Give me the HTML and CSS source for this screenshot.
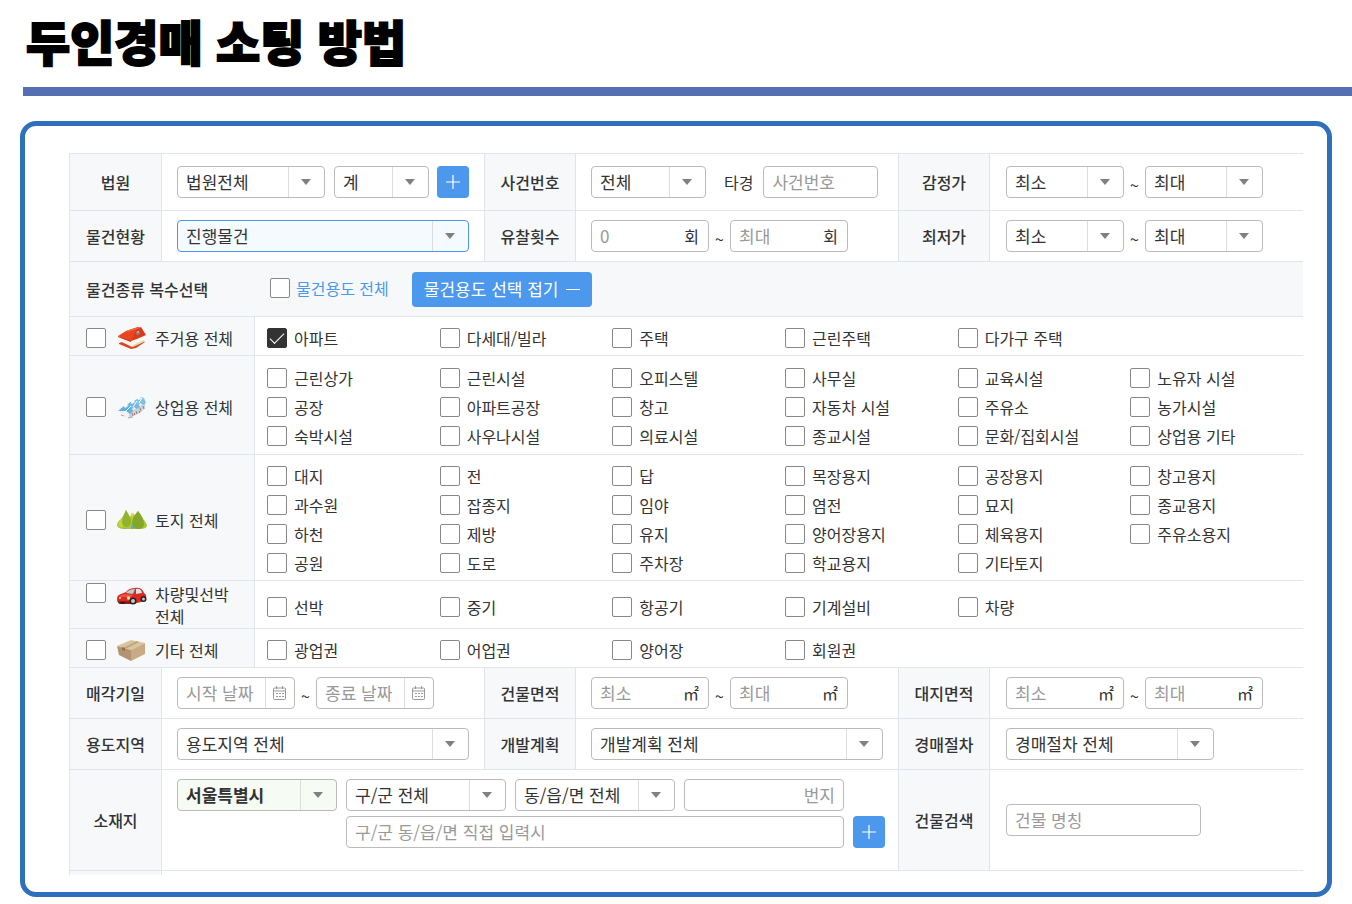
FILE: index.html
```html
<!DOCTYPE html>
<html lang="ko">
<head>
<meta charset="utf-8">
<meta name="viewport" content="width=device-width, initial-scale=1">
<title>두인경매 소팅 방법</title>
<link rel="stylesheet" href="styles.css">
</head>
<body>
<header class="page-header">
  <h1 class="page-title">두인경매 소팅 방법</h1>
</header>
<main class="card">
  <form class="search">
    <div class="row row-first">
      <div class="head">법원</div>
      <div class="cell">
        <span class="select w-court"><select aria-label="법원"><option>법원전체</option></select></span>
        <span class="select w-dept"><select aria-label="계"><option>계</option></select></span>
        <button type="button" class="add" aria-label="법원 추가"><svg viewBox="0 0 32 32"><path d="M16 9v14M9 16h14"/></svg></button>
      </div>
      <div class="head">사건번호</div>
      <div class="cell">
        <span class="select w-case"><select aria-label="사건연도"><option>전체</option></select></span>
        <label class="case-label" for="case-no">타경</label>
        <span class="field w-case"><input id="case-no" type="text" placeholder="사건번호"></span>
      </div>
      <div class="head">감정가</div>
      <div class="cell cell-last">
        <span class="select w-range"><select aria-label="감정가 최소"><option>최소</option></select></span>
        <span class="tilde">~</span>
        <span class="select w-range"><select aria-label="감정가 최대"><option>최대</option></select></span>
      </div>
    </div>

    <div class="row">
      <div class="head">물건현황</div>
      <div class="cell">
        <span class="select select-active grow"><select aria-label="물건현황"><option>진행물건</option></select></span>
      </div>
      <div class="head">유찰횟수</div>
      <div class="cell">
        <span class="field w-range"><input type="text" placeholder="0" aria-label="유찰횟수 최소"><span class="unit">회</span></span>
        <span class="tilde">~</span>
        <span class="field w-range"><input type="text" placeholder="최대" aria-label="유찰횟수 최대"><span class="unit">회</span></span>
      </div>
      <div class="head">최저가</div>
      <div class="cell cell-last">
        <span class="select w-range"><select aria-label="최저가 최소"><option>최소</option></select></span>
        <span class="tilde">~</span>
        <span class="select w-range"><select aria-label="최저가 최대"><option>최대</option></select></span>
      </div>
    </div>

    <div class="kind-bar">
      <div class="kind-title">물건종류 복수선택</div>
      <label class="check check-all"><input type="checkbox">물건용도 전체</label>
      <button type="button" class="fold">물건용도 선택 접기<svg viewBox="0 0 14 14"><path d="M0 7.5h14"/></svg></button>
    </div>

    <div class="kind">
      <label class="kind-head"><input type="checkbox">
        <svg class="kind-icon" viewBox="0 0 30 24">
          <path fill="#e0401f" d="M2 17l3-1 10 4 11-5 2 1-9 6-5 1-12-5z"/>
          <path fill="#f6f1e9" d="M5 12v4l10 5 1-8z"/>
          <path fill="#fbf8ee" d="M15 13v8l12-6V9z"/>
          <path fill="#dcdca8" d="M16 19l11-5v2l-11 5z"/>
          <path fill="#c32c12" d="M1 10l13 4v2L1 11z"/>
          <path fill="#ea4420" d="M1 10l8-5L21 1l3 1-5 9-5 4z"/>
          <path fill="#d93a1b" d="M24 1l5 8-9 4-6 2 6-12z"/>
          <path fill="#f2613c" d="M9 5l12-4 2 1-12 4z"/>
          <circle cx="21" cy="7" r="2" fill="#8d7d83"/><circle cx="21" cy="6" r="1" fill="#c9b9bc"/>
        </svg>
        <span>주거용 전체</span></label>
      <div class="kind-body">
        <label class="check"><input type="checkbox" checked>아파트</label>
        <label class="check"><input type="checkbox">다세대/빌라</label>
        <label class="check"><input type="checkbox">주택</label>
        <label class="check"><input type="checkbox">근린주택</label>
        <label class="check"><input type="checkbox">다가구 주택</label>
      </div>
    </div>

    <div class="kind kind-3">
      <label class="kind-head"><input type="checkbox">
        <svg class="kind-icon" viewBox="0 0 30 24">
          <path fill="#f1f2f3" d="M3 14l10 0 15-9v8l-5 5-12 5-8-3z"/>
          <path fill="#d0d1d2" d="M12 18l4-3 12-7v5l-5 5-11 5z"/>
          <path fill="#62b2e0" d="M1 16l7-6 6 1 2 5-3 3-4-3z"/>
          <path fill="#70bbe5" d="M9 11l6-6 5 1 3 6-3 2-3-2-2 2-2-3z"/>
          <path fill="#7dc3e8" d="M17 6l6-4 4 1 2 5-3 2-3-2-1 2-2-3z"/>
          <path stroke="#fff" stroke-width="1" d="M14 11l-5 5M20 6l-4 6M25 3l-3 5"/>
          <path fill="#fff" d="M6 10l3-2 2 3-3 2zM13 6l3-2 2 3-3 2zM20 2l3-1 1 3-3 1z"/>
          <path stroke="#85888c" stroke-width="1" d="M15 18l1 3M19 16l1 3M23 13l1 3M26 11l1 3"/>
          <path stroke="#b1a79b" stroke-width="1" d="M11 23l5-1M4 20l3 1"/>
          <path fill="#c77258" d="M17 18h1v2h-1zM22 16h1v2h-1z"/>
        </svg>
        <span>상업용 전체</span></label>
      <div class="kind-body">
        <label class="check"><input type="checkbox">근린상가</label>
        <label class="check"><input type="checkbox">근린시설</label>
        <label class="check"><input type="checkbox">오피스텔</label>
        <label class="check"><input type="checkbox">사무실</label>
        <label class="check"><input type="checkbox">교육시설</label>
        <label class="check"><input type="checkbox">노유자 시설</label>
        <label class="check"><input type="checkbox">공장</label>
        <label class="check"><input type="checkbox">아파트공장</label>
        <label class="check"><input type="checkbox">창고</label>
        <label class="check"><input type="checkbox">자동차 시설</label>
        <label class="check"><input type="checkbox">주유소</label>
        <label class="check"><input type="checkbox">농가시설</label>
        <label class="check"><input type="checkbox">숙박시설</label>
        <label class="check"><input type="checkbox">사우나시설</label>
        <label class="check"><input type="checkbox">의료시설</label>
        <label class="check"><input type="checkbox">종교시설</label>
        <label class="check"><input type="checkbox">문화/집회시설</label>
        <label class="check"><input type="checkbox">상업용 기타</label>
      </div>
    </div>

    <div class="kind kind-4">
      <label class="kind-head"><input type="checkbox">
        <svg class="kind-icon" viewBox="0 0 30 24">
          <path fill="#a9c832" d="M0 17q0-3 4-6Q7 8 9 2q2 5 4 7l2-4 3 2 3-4q3 4 5 8 4 4 4 7-1 3-7 3H6q-6-1-6-4z"/>
          <path fill="#c0d444" d="M1 16q1-4 6-6l1 9H4q-3 0-3-3z"/>
          <path fill="#93b32f" d="M9 2q-3 6-4 11 0 5 3 6 6 0 6-5 0-4-5-12z"/>
          <path fill="#86a62a" d="M21 3q-6 7-6 13 0 5 6 5t6-5q0-6-6-13z"/>
          <path fill="#d8e17a" d="M14 5h3l-2 5z"/>
          <path fill="#58aee6" d="M14 17h2v2l1 2h-3zM6 20l4 1H7z"/>
        </svg>
        <span>토지 전체</span></label>
      <div class="kind-body">
        <label class="check"><input type="checkbox">대지</label>
        <label class="check"><input type="checkbox">전</label>
        <label class="check"><input type="checkbox">답</label>
        <label class="check"><input type="checkbox">목장용지</label>
        <label class="check"><input type="checkbox">공장용지</label>
        <label class="check"><input type="checkbox">창고용지</label>
        <label class="check"><input type="checkbox">과수원</label>
        <label class="check"><input type="checkbox">잡종지</label>
        <label class="check"><input type="checkbox">임야</label>
        <label class="check"><input type="checkbox">염전</label>
        <label class="check"><input type="checkbox">묘지</label>
        <label class="check"><input type="checkbox">종교용지</label>
        <label class="check"><input type="checkbox">하천</label>
        <label class="check"><input type="checkbox">제방</label>
        <label class="check"><input type="checkbox">유지</label>
        <label class="check"><input type="checkbox">양어장용지</label>
        <label class="check"><input type="checkbox">체육용지</label>
        <label class="check"><input type="checkbox">주유소용지</label>
        <label class="check"><input type="checkbox">공원</label>
        <label class="check"><input type="checkbox">도로</label>
        <label class="check"><input type="checkbox">주차장</label>
        <label class="check"><input type="checkbox">학교용지</label>
        <label class="check"><input type="checkbox">기타토지</label>
      </div>
    </div>

    <div class="kind">
      <label class="kind-head kind-head-wrap"><input type="checkbox">
        <svg class="kind-icon" viewBox="0 0 30 24">
          <path fill="#d92a20" d="M0 16q0-4 4-5l5-2q3-4 9-4 7-1 9 5 3 2 2 5l-1 3-12 3H3q-3-1-3-5z"/>
          <path fill="#b3ced6" d="M9 10q3-4 9-4l-2 5z"/>
          <path fill="#d7e3e6" d="M19 6q5-1 6 4l-6 1z"/>
          <path fill="#ef5144" d="M2 13l6-2 8 1-2 2H3z"/>
          <path fill="#9a1914" d="M1 18h11l2 3H4q-3 0-3-3z"/>
          <circle cx="16" cy="18" r="3.5" fill="#222"/><circle cx="16" cy="18" r="2" fill="#c8c8c8"/>
          <circle cx="26.5" cy="16" r="3" fill="#222"/><circle cx="26.5" cy="16" r="1.5" fill="#c8c8c8"/>
          <path fill="#26211f" d="M3 19h5v2H4z"/>
          <circle cx="11.5" cy="15" r="1.7" fill="#ffe29a"/><circle cx="3" cy="15" r="1" fill="#ffd98a"/>
        </svg>
        <span>차량및선박 전체</span></label>
      <div class="kind-body">
        <label class="check"><input type="checkbox">선박</label>
        <label class="check"><input type="checkbox">중기</label>
        <label class="check"><input type="checkbox">항공기</label>
        <label class="check"><input type="checkbox">기계설비</label>
        <label class="check"><input type="checkbox">차량</label>
      </div>
    </div>

    <div class="kind">
      <label class="kind-head"><input type="checkbox">
        <svg class="kind-icon" viewBox="0 0 30 24">
          <path fill="#dcc3a0" d="M0 8l14-6 14 3-14 7z"/>
          <path fill="#b39370" d="M0 8l14 4v11L2 17z"/>
          <path fill="#c8aa84" d="M14 12l14-7v11l-14 7z"/>
          <path fill="#bfa27c" d="M6 10l14-7 2 1-14 7z"/>
          <path fill="#8d6f52" d="M5 9l3 1v3l-3-1z"/>
        </svg>
        <span>기타 전체</span></label>
      <div class="kind-body">
        <label class="check"><input type="checkbox">광업권</label>
        <label class="check"><input type="checkbox">어업권</label>
        <label class="check"><input type="checkbox">양어장</label>
        <label class="check"><input type="checkbox">회원권</label>
      </div>
    </div>

    <div class="row">
      <div class="head">매각기일</div>
      <div class="cell">
        <span class="field w-range"><input type="text" placeholder="시작 날짜" aria-label="시작 날짜"><button type="button" class="cal" aria-label="시작 날짜 선택"><svg viewBox="0 0 14 14"><path d="M1.5 2h10q1 0 1 1v9.500q0 1-1 1h-10q-1 0-1-1V3q0-1 1-1zM.5 5h12M3.500 0v3M9.500 0v3"/><path stroke-dasharray="2 1" d="M3 7.500h8M3 10.500h8"/></svg></button></span>
        <span class="tilde">~</span>
        <span class="field w-range"><input type="text" placeholder="종료 날짜" aria-label="종료 날짜"><button type="button" class="cal" aria-label="종료 날짜 선택"><svg viewBox="0 0 14 14"><path d="M1.5 2h10q1 0 1 1v9.500q0 1-1 1h-10q-1 0-1-1V3q0-1 1-1zM.5 5h12M3.500 0v3M9.500 0v3"/><path stroke-dasharray="2 1" d="M3 7.500h8M3 10.500h8"/></svg></button></span>
      </div>
      <div class="head">건물면적</div>
      <div class="cell">
        <span class="field w-range"><input type="text" placeholder="최소" aria-label="건물면적 최소"><span class="unit">㎡</span></span>
        <span class="tilde">~</span>
        <span class="field w-range"><input type="text" placeholder="최대" aria-label="건물면적 최대"><span class="unit">㎡</span></span>
      </div>
      <div class="head">대지면적</div>
      <div class="cell cell-last">
        <span class="field w-range"><input type="text" placeholder="최소" aria-label="대지면적 최소"><span class="unit">㎡</span></span>
        <span class="tilde">~</span>
        <span class="field w-range"><input type="text" placeholder="최대" aria-label="대지면적 최대"><span class="unit">㎡</span></span>
      </div>
    </div>

    <div class="row">
      <div class="head">용도지역</div>
      <div class="cell">
        <span class="select grow"><select aria-label="용도지역"><option>용도지역 전체</option></select></span>
      </div>
      <div class="head">개발계획</div>
      <div class="cell">
        <span class="select grow"><select aria-label="개발계획"><option>개발계획 전체</option></select></span>
      </div>
      <div class="head">경매절차</div>
      <div class="cell cell-last">
        <span class="select w-process"><select aria-label="경매절차"><option>경매절차 전체</option></select></span>
      </div>
    </div>

    <div class="row row-place">
      <div class="head">소재지</div>
      <div class="cell place">
        <span class="select select-city"><select aria-label="시/도"><option>서울특별시</option></select></span>
        <span class="select"><select aria-label="구/군"><option>구/군 전체</option></select></span>
        <span class="select"><select aria-label="동/읍/면"><option>동/읍/면 전체</option></select></span>
        <span class="field field-right"><input type="text" placeholder="번지" aria-label="번지"></span>
        <span class="field place-direct"><input type="text" placeholder="구/군 동/읍/면 직접 입력시" aria-label="주소 직접 입력"></span>
        <button type="button" class="add" aria-label="소재지 추가"><svg viewBox="0 0 32 32"><path d="M16 9v14M9 16h14"/></svg></button>
      </div>
      <div class="head">건물검색</div>
      <div class="cell cell-last">
        <span class="field w-name"><input type="text" placeholder="건물 명칭" aria-label="건물 명칭"></span>
      </div>
    </div>

    <div class="row row-rest"><div class="head"></div></div>
  </form>
</main>
</body>
</html>
```

FILE: styles.css
```css
* { box-sizing: border-box; }

body {
  margin: 0;
  background: #fff;
  color: #333;
  font: 16px/22px "Noto Sans CJK KR", "Noto Sans", sans-serif;
}

input, select, button { font: inherit; color: inherit; margin: 0; }

.page-header {
  margin-left: 23px;
  padding: 4px 0 11px 3px;
  border-bottom: 9px solid #556fb2;
}

.page-title {
  margin: 0;
  color: #000;
  font-size: 48px;
  line-height: 72px;
  font-weight: 900;
  -webkit-text-stroke: 2px #000;
}

.card {
  margin: 25px 20px 7px;
  padding: 27px 24px 17px 44px;
  border: 5px solid #2e70be;
  border-radius: 16px;
}

.search {
  border-top: 1px solid #e0e5ec;
  border-left: 1px solid #e0e5ec;
}

/* three label/value pairs per row */
.row {
  display: grid;
  grid-template-columns: 92px 323fr 91px 323fr 91px 313fr;
  min-height: 51px;
}
.row-first { min-height: 57px; }
.row-place { min-height: 101px; }
.row-rest { min-height: 4px; }

.head, .cell {
  display: flex;
  align-items: center;
  min-width: 0;
  border-right: 1px solid #e0e5ec;
  border-bottom: 1px solid #e0e5ec;
}
.head {
  justify-content: center;
  background: #f6f8fa;
  font-weight: 500;
}
.row-rest .head { border-bottom: 0; }
.cell { padding: 0 15px; }
.cell-last { border-right: 0; padding-left: 16px; }

.w-court { width: 148px; margin-right: 9px; }
.w-dept { width: 95px; margin-right: 8px; }
.w-case { width: 115px; }
.w-range { width: 118px; }
.w-process { width: 208px; }
.w-name { width: 195px; }
.grow { flex: 1; }

.case-label { margin: 0 10px 0 18px; }
.tilde { width: 21px; text-align: center; padding-top: 6px; }

.select, .field {
  height: 32px;
  border: 1px solid #bbb;
  border-radius: 4px;
  background: #fff;
  font-size: 17px;
}

.select { display: grid; align-items: center; }
.select select {
  grid-area: 1 / 1;
  width: 100%;
  height: 30px;
  padding: 0 40px 0 8px;
  border: 0;
  border-radius: 3px;
  appearance: none;
  background: linear-gradient(#ddd, #ddd) right 35px top / 1px 100% no-repeat;
}
.select::after {
  content: "";
  grid-area: 1 / 1;
  justify-self: end;
  width: 10px;
  height: 6px;
  margin-right: 13px;
  background: #808080;
  clip-path: polygon(0 0, 100% 0, 50% 100%);
  pointer-events: none;
}
.select-active { border-color: #4b98ec; background: #f5faff; }
.select-city { background: #f6fbf4; font-weight: 700; }

.field { display: flex; align-items: center; }
.field input {
  flex: 1;
  min-width: 0;
  height: 30px;
  padding: 0 0 2px 8px;
  border: 0;
  outline: 0;
  background: none;
}
.field input::placeholder { color: #999; opacity: 1; }
.field-right input { padding-right: 8px; text-align: right; }
.unit { padding: 0 9px 0 4px; font-size: 16px; }

.cal {
  width: 29px;
  height: 30px;
  padding: 0;
  border: 0;
  border-left: 1px solid #ddd;
  background: none;
}
.cal svg { display: block; width: 14px; height: 14px; margin: 0 auto; fill: none; stroke: #999; }

.add {
  width: 32px;
  height: 32px;
  padding: 0;
  border: 0;
  border-radius: 4px;
  background: #4b98ec;
}
.add svg { display: block; width: 32px; height: 32px; stroke: #fff; stroke-width: 1.2; }

.kind-bar {
  display: flex;
  align-items: center;
  min-height: 55px;
  padding-left: 16px;
  border-bottom: 1px solid #e0e5ec;
  background: #f6f8fa;
}
.kind-title { width: 184px; font-weight: 500; }
.fold {
  display: flex;
  align-items: center;
  gap: 8px;
  height: 35px;
  margin-left: 23px;
  padding: 0 12px;
  border: 0;
  border-radius: 4px;
  background: #4b98ec;
  color: #fff;
  font-size: 17px;
}
.fold svg { width: 14px; height: 14px; stroke: #fff; }

.kind {
  display: grid;
  grid-template-columns: 185px 1fr;
  min-height: 39px;
}
.kind-3 { min-height: 99px; }
.kind-4 { min-height: 126px; }

.kind-head, .kind-body { border-bottom: 1px solid #e0e5ec; }
.kind-head {
  display: flex;
  align-items: center;
  padding: 4px 20px 0 16px;
  border-right: 1px solid #e0e5ec;
  background: #f6f8fa;
}
.kind-head-wrap { align-items: flex-start; padding: 2px 20px 1px 16px; }
.kind-icon { flex: none; width: 30px; height: 24px; margin: 0 8px 0 11px; }

.kind-body {
  display: grid;
  grid-template-columns: repeat(6, 1fr);
  grid-auto-rows: 29px;
  align-content: center;
  padding: 4px 0 0 12px;
}

.check { display: flex; align-items: center; gap: 7px; }
.check-all { color: #4b98ec; gap: 6px; padding-bottom: 3px; }

input[type="checkbox"] {
  flex: none;
  width: 20px;
  height: 20px;
  border: 1px solid #888;
  border-radius: 2px;
  appearance: none;
  background: #fff;
}
input[type="checkbox"]:checked { display: grid; place-items: center; background: #333; border-color: #333; }
input[type="checkbox"]:checked::before {
  content: "";
  width: 13px;
  height: 6px;
  border: solid #fff;
  border-width: 0 0 1px 1px;
  transform: translateY(-2px) rotate(-45deg);
}

.place {
  grid-column: span 3;
  display: grid;
  grid-template-columns: repeat(4, 160px) 32px;
  align-content: start;
  gap: 5px 9px;
  padding-top: 9px;
}
.place-direct { grid-column: 2 / 5; }
```
